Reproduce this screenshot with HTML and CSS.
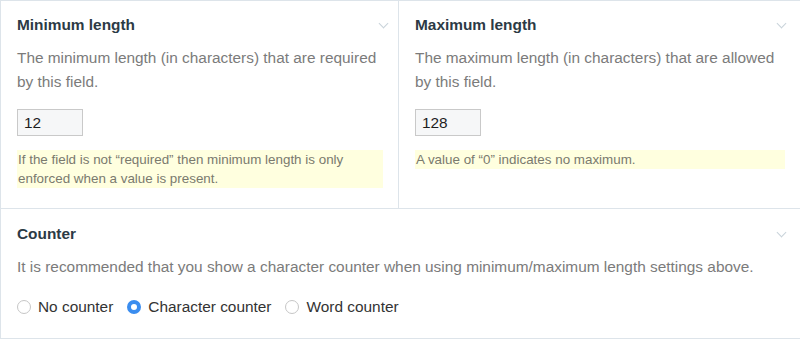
FILE: index.html
```html
<!DOCTYPE html>
<html lang="en">
<head>
    <meta charset="UTF-8">
    <meta name="viewport" content="width=device-width, initial-scale=1.0">
    <title>Field length settings</title>
    <link rel="stylesheet" href="styles.css">
</head>
<body>
    <div class="settings">
        <div class="settings-row">
            <div class="setting">
                <div class="setting-head">
                    <h3>Minimum length</h3>
                    <span class="chevron"></span>
                </div>
                <p class="help">The minimum length (in characters) that are required by this field.</p>
                <input type="text" class="num-input" value="12">
                <p class="note">If the field is not “required” then minimum length is only enforced when a value is present.</p>
            </div>
            <div class="setting">
                <div class="setting-head">
                    <h3>Maximum length</h3>
                    <span class="chevron"></span>
                </div>
                <p class="help">The maximum length (in characters) that are allowed by this field.</p>
                <input type="text" class="num-input" value="128">
                <p class="note">A value of “0” indicates no maximum.</p>
            </div>
        </div>

        <div class="setting setting-wide">
            <div class="setting-head">
                <h3>Counter</h3>
                <span class="chevron"></span>
            </div>
            <p class="help">It is recommended that you show a character counter when using minimum/maximum length settings above.</p>
            <div class="radios">
                <label class="radio"><input type="radio" name="counter"> No counter</label>
                <label class="radio"><input type="radio" name="counter" checked> Character counter</label>
                <label class="radio"><input type="radio" name="counter"> Word counter</label>
            </div>
        </div>
    </div>
</body>
</html>
```

FILE: styles.css
```css
body {
    margin: 0;
    font-family: "Liberation Sans", Arial, sans-serif;
    background-color: #fff;
}

.settings {
    width: 800px;
    border-top: 1px solid #dde4ea;
    border-bottom: 1px solid #dde4ea;
    box-sizing: border-box;
}

.settings-row {
    display: grid;
    grid-template-columns: 399px 1fr;
    border-bottom: 1px solid #dde4ea;
}

.setting {
    padding: 12px 15px 20px 16px;
}

.settings-row .setting:first-child {
    border-left: 1px solid #dde4ea;
    border-right: 1px solid #dde4ea;
}

.setting-wide {
    border-left: 1px solid #dde4ea;
    padding-top: 13px;
    padding-bottom: 19px;
}

.setting-head {
    display: flex;
    justify-content: space-between;
    align-items: center;
}

.setting-head h3 {
    margin: 0;
    font-size: 15.4px;
    line-height: 24px;
    font-weight: bold;
    color: #2c3a45;
}

.chevron {
    width: 6px;
    height: 6px;
    border-right: 1px solid #c9d3da;
    border-bottom: 1px solid #c9d3da;
    transform: rotate(45deg);
    margin: -4px 0 0 0;
}

.settings-row .setting:first-child .chevron {
    margin-right: -4px;
}

.help {
    margin: 9px 0 0;
    font-size: 15.4px;
    line-height: 24px;
    color: #7b7b7b;
}

.num-input {
    display: block;
    width: 66px;
    height: 27px;
    box-sizing: border-box;
    margin-top: 15px;
    padding: 0 6px;
    border: 1px solid #c9c9c9;
    background-color: #f6f7f8;
    font-family: "Liberation Sans", Arial, sans-serif;
    font-size: 15.4px;
    color: #1e1e1e;
}

.note {
    margin: 14px 0 0;
    padding: 0 1px;
    background-color: #ffffdf;
    font-size: 13.4px;
    line-height: 19px;
    color: #7a7a6e;
}

.radios {
    display: flex;
    gap: 14px;
    margin-top: 16px;
}

.radio {
    display: flex;
    align-items: center;
    font-size: 15.4px;
    line-height: 24px;
    color: #333;
}

.radio input {
    appearance: none;
    width: 14px;
    height: 14px;
    margin: 0 7px 0 0;
    border: 1px solid #c6c6c6;
    border-radius: 50%;
    background-color: #fff;
    box-sizing: border-box;
}

.radio input:checked {
    border: 4.5px solid #3b8def;
    background-color: #fff;
}
```
